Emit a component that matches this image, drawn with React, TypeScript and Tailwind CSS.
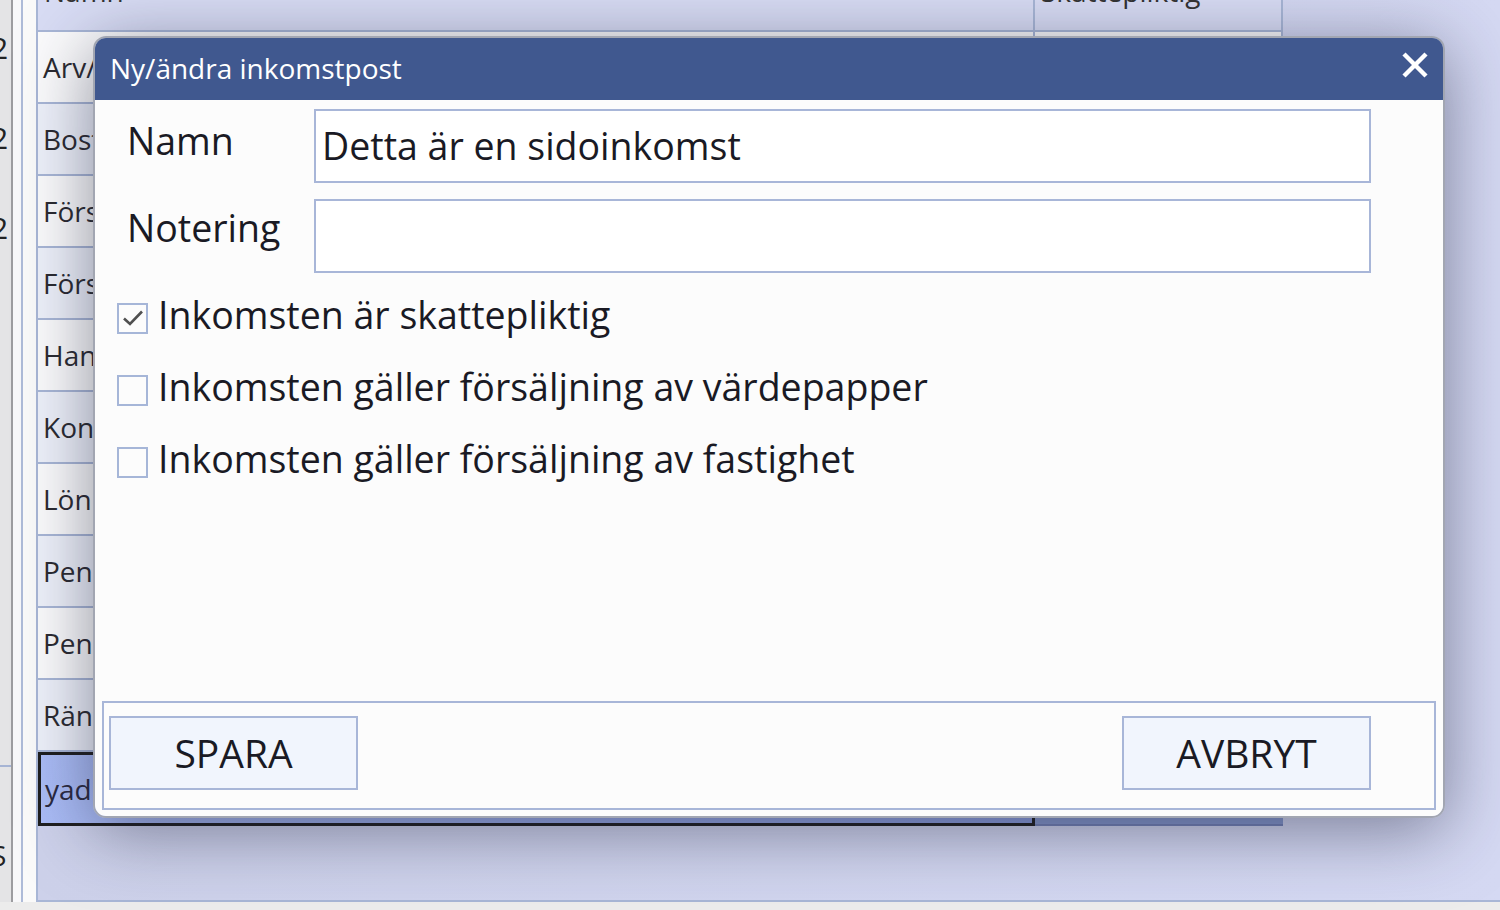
import React from 'react'

const rows = ['Arv/arvode', 'Bostadsbidrag', 'Försäkring', 'Försäljning', 'Hantverk', 'Konsult', 'Lön', 'Pension', 'Pension', 'Ränta']

const options = [
  { label: 'Inkomsten är skattepliktig', checked: true },
  { label: 'Inkomsten gäller försäljning av värdepapper', checked: false },
  { label: 'Inkomsten gäller försäljning av fastighet', checked: false },
]

function Checkbox({ checked }: { checked: boolean }) {
  return (
    <div className="w-[31px] h-[31px] shrink-0 border-2 border-[#a6b6d8] bg-[#fcfcfc] flex items-center justify-center">
      {checked && (
        <svg width="24" height="24" viewBox="0 0 24 24">
          <polyline points="3,12.5 9,18 21,5.5" fill="none" stroke="#505050" strokeWidth="2.6" />
        </svg>
      )}
    </div>
  )
}

export default function App() {
  return (
    <div className="relative w-[1500px] h-[910px] overflow-hidden bg-[#ececec] font-['Open_Sans',sans-serif] text-[#1a1a24]">
      {/* background window */}
      <div className="flex h-[902px]">
        <div className="w-[11px] bg-[#e4e4e6] overflow-hidden flex flex-col text-[30px] leading-none text-[#222]">
          <div className="h-[90px] pt-[33px] -ml-[9px]">2</div>
          <div className="h-[90px] pt-[33px] -ml-[9px]">2</div>
          <div className="h-[90px] pt-[33px] -ml-[9px]">2</div>
          <div className="h-[495px]" />
          <div className="h-[2px] bg-[#a6b4d4]" />
          <div className="pt-[74px] -ml-[9px] text-[28px]">S</div>
        </div>
        <div className="w-[2px] bg-[#9c9ca0]" />
        <div className="w-[8px] bg-[#f8f8fa]" />
        <div className="w-[2px] bg-[#aebbd8]" />
        <div className="w-[13px] bg-[#fafafa]" />
        <div className="flex-1 flex flex-col border-l-2 border-b-2 border-[#a8b6d6] bg-gradient-to-r from-[#cdd1ea] to-[#d5d9f3]">
          <div className="flex h-[32px] shrink-0">
            <div className="w-[997px] border-r-2 border-b-2 border-[#a8b6d6] bg-[#d8dcf4] overflow-hidden">
              <div className="-mt-[30px] pl-[6px] text-[28px] text-[#333]">Namn</div>
            </div>
            <div className="w-[248px] border-r-2 border-b-2 border-[#a8b6d6] bg-[#d8dcf4] overflow-hidden">
              <div className="-mt-[30px] pl-[6px] text-[28px] text-[#333]">Skattepliktig</div>
            </div>
          </div>
          {rows.map((r, i) => (
            <div key={i} className="flex h-[72px] shrink-0">
              <div
                className={`w-[997px] border-r-2 border-b-2 border-[#a8b6d6] flex items-center pl-[5px] text-[28px] text-[#2a2a30] overflow-hidden whitespace-nowrap ${
                  i % 2 === 0 ? 'bg-[#fbfbfc]' : 'bg-[#eef1fa]'
                }`}
              >
                {r}
              </div>
              <div
                className={`w-[248px] border-r-2 border-b-2 border-[#a8b6d6] ${
                  i % 2 === 0 ? 'bg-[#fbfbfc]' : 'bg-[#eef1fa]'
                }`}
              />
            </div>
          ))}
          <div className="flex h-[74px] shrink-0">
            <div className="w-[997px] border-[3px] border-[#1e1e1e] bg-gradient-to-r from-[#aabcf6] to-[#8c9ee0] flex items-center pl-[4px] text-[28px] text-[#2a2a40]">
              yad
            </div>
            <div className="w-[248px] bg-[#8799cf] border-b-2 border-[#7484b8]" />
          </div>
        </div>
      </div>

      {/* dialog */}
      <div className="absolute left-[93px] top-[36px] w-[1352px] h-[782px] rounded-[13px] border-2 border-[#a2a6b2] overflow-hidden flex flex-col shadow-[0_12px_70px_rgba(30,34,60,0.5)]">
        <div className="h-[62px] shrink-0 bg-[#40588f] flex items-center justify-between pl-[15px] pr-[14px]">
          <span className="text-[28px] text-white leading-none -mt-[2px]">Ny/ändra inkomstpost</span>
          <svg width="28" height="28" viewBox="0 0 28 28" className="-mt-[8px]">
            <line x1="3" y1="3" x2="25" y2="25" stroke="white" strokeWidth="4.5" />
            <line x1="25" y1="3" x2="3" y2="25" stroke="white" strokeWidth="4.5" />
          </svg>
        </div>
        <div className="flex-1 flex flex-col bg-[#fcfcfc]">
          <div className="pt-[9px] pl-[32px] pr-[72px] flex flex-col gap-[16px]">
            <div className="flex items-center h-[74px]">
              <div className="w-[187px] text-[37.5px] -mt-[10px]">Namn</div>
              <div className="flex-1 h-[74px] border-2 border-[#a8b6d8] bg-white flex items-center pl-[6px] text-[37.5px]">
                Detta är en sidoinkomst
              </div>
            </div>
            <div className="flex items-center h-[74px]">
              <div className="w-[187px] text-[37.5px] -mt-[16px]">Notering</div>
              <div className="flex-1 h-[74px] border-2 border-[#a8b6d8] bg-white" />
            </div>
          </div>
          <div className="mt-[9px] pl-[22px] flex flex-col">
            {options.map((o) => (
              <div key={o.label} className="h-[72px] flex items-center gap-[10px]">
                <Checkbox checked={o.checked} />
                <span className="text-[37.5px] leading-none -mt-[6px]">{o.label}</span>
              </div>
            ))}
          </div>
          <div className="mt-auto mx-[7px] mb-[6px] h-[109px] border-2 border-[#a8b6d8] flex items-start justify-between pt-[13px] pl-[5px] pr-[63px]">
            <div className="w-[249px] h-[74px] border-2 border-[#a8b6d8] bg-[#f1f5fd] flex items-center justify-center text-[39px]">
              SPARA
            </div>
            <div className="w-[249px] h-[74px] border-2 border-[#a8b6d8] bg-[#f1f5fd] flex items-center justify-center text-[39px]">
              AVBRYT
            </div>
          </div>
        </div>
      </div>
    </div>
  )
}
